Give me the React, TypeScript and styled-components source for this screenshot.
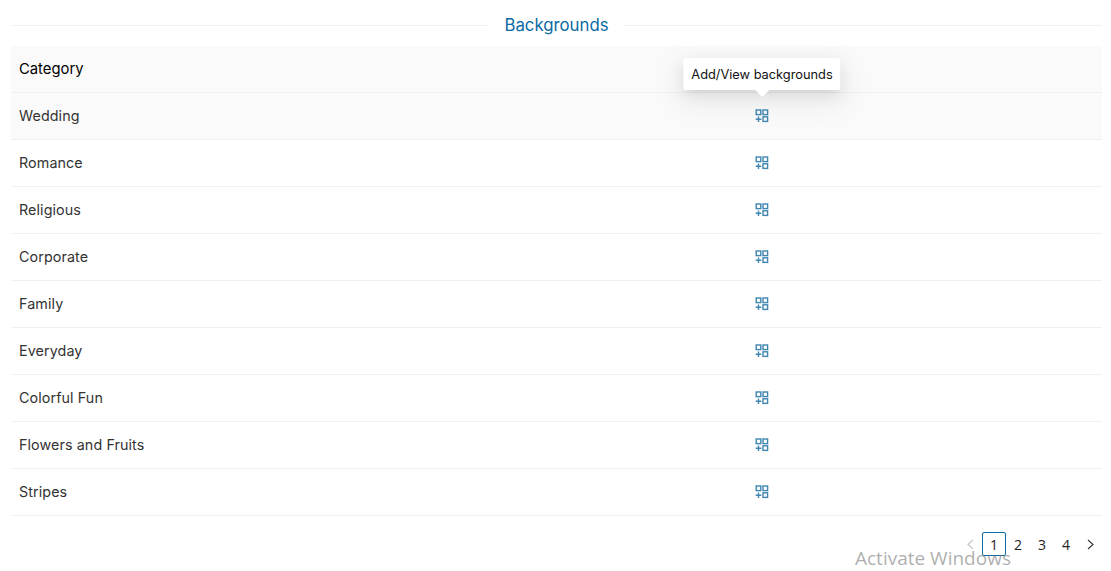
import React from 'react';
import styled, { createGlobalStyle } from 'styled-components';

const GlobalStyle = createGlobalStyle`
  html, body {
    margin: 0;
    padding: 0;
    background: #fff;
  }
  body {
    font-family: Inter, "Noto Sans", sans-serif;
    overflow: hidden;
  }
`;

const Page = styled.div`
  position: relative;
  width: 1111px;
  height: 571px;
  padding: 0 9px 0 11px;
  box-sizing: border-box;
  overflow: hidden;
`;
const TitleRow = styled.div`
  display: flex;
  align-items: center;
  gap: 16px;
  padding: 10px 0 6px;
`;
const TitleLine = styled.div`
  flex: 1;
  height: 1px;
  background: #f0f0f0;
`;
const Title = styled.h2`
  margin: 0;
  font-size: 16.8px;
  line-height: 30px;
  font-weight: 400;
  color: #0b6ba3;
`;
const Row = styled.div<{ $shaded?: boolean }>`
  display: grid;
  grid-template-columns: 411px 680px;
  align-items: center;
  height: 47px;
  box-sizing: border-box;
  border-bottom: 1px solid #f0f0f0;
  background: ${(p) => (p.$shaded ? '#fafafa' : '#fff')};
`;
const HeadCell = styled.div`
  padding-left: 8px;
  font-size: 14.8px;
  font-weight: 400;
  color: #000;
`;
const NameCell = styled.div`
  padding: 0 0 2px 8px;
  font-size: 14.3px;
  letter-spacing: 0.1px;
  color: #333;
`;
const ActionCell = styled.div`
  position: relative;
  display: flex;
  justify-content: center;
  align-items: center;
`;
const Tooltip = styled.div`
  position: absolute;
  left: 50%;
  bottom: 33px;
  transform: translateX(-50%);
  padding: 0 8px;
  height: 32px;
  display: flex;
  align-items: center;
  white-space: nowrap;
  font-size: 12.8px;
  color: #111;
  background: #fff;
  border-radius: 2px;
  box-shadow: 0 3px 6px -4px rgba(0, 0, 0, 0.12), 0 6px 16px 0 rgba(0, 0, 0, 0.08),
    0 9px 28px 8px rgba(0, 0, 0, 0.05);
  z-index: 2;
  &::after {
    content: '';
    position: absolute;
    left: 50%;
    bottom: -5px;
    width: 10px;
    height: 10px;
    background: #fff;
    transform: translateX(-50%) rotate(45deg);
  }
`;
const Pager = styled.div`
  display: flex;
  justify-content: flex-end;
  align-items: center;
  margin-top: 16px;
  font-family: "Open Sans", sans-serif;
  font-size: 14px;
`;
const PageItem = styled.div<{ $active?: boolean }>`
  width: 24px;
  height: 24px;
  box-sizing: border-box;
  display: flex;
  align-items: center;
  justify-content: center;
  color: #222;
  border: 1px solid ${(p) => (p.$active ? '#0b6ba3' : 'transparent')};
  border-radius: 2px;
`;
const Watermark = styled.div`
  position: absolute;
  left: 855px;
  top: 545px;
  font-family: "Open Sans", sans-serif;
  font-size: 19px;
  line-height: 26px;
  color: rgba(120, 120, 120, 0.6);
  pointer-events: none;
  white-space: nowrap;
`;

const categories = [
  'Wedding',
  'Romance',
  'Religious',
  'Corporate',
  'Family',
  'Everyday',
  'Colorful Fun',
  'Flowers and Fruits',
  'Stripes',
];

const AddGridIcon = () => (
  <svg width="14" height="14" viewBox="0 0 14 14" fill="none" stroke="#3f86b0" strokeWidth="1.4">
    <rect x="1.2" y="1" width="4.6" height="4.6" />
    <rect x="8" y="1" width="4.6" height="4.6" />
    <rect x="8" y="7.8" width="4.6" height="4.6" />
    <path d="M3.5 7.4v5.6M0.7 10.2h5.6" />
  </svg>
);

const Chevron = ({ left, color }: { left?: boolean; color: string }) => (
  <svg width="11" height="13" viewBox="0 0 11 13" fill="none" stroke={color} strokeWidth="1.1">
    <path d={left ? 'M8 2 3 6.5 8 11' : 'M3 2 8 6.5 3 11'} />
  </svg>
);

export default function App() {
  return (
    <Page>
      <GlobalStyle />
      <TitleRow>
        <TitleLine />
        <Title>Backgrounds</Title>
        <TitleLine />
      </TitleRow>
      <Row $shaded>
        <HeadCell>Category</HeadCell>
      </Row>
      {categories.map((name, index) => (
        <Row key={name} $shaded={index === 0}>
          <NameCell>{name}</NameCell>
          <ActionCell>
            {index === 0 && <Tooltip>Add/View backgrounds</Tooltip>}
            <AddGridIcon />
          </ActionCell>
        </Row>
      ))}
      <Pager>
        <PageItem>
          <Chevron left color="#c4c4c4" />
        </PageItem>
        <PageItem $active>1</PageItem>
        <PageItem>2</PageItem>
        <PageItem>3</PageItem>
        <PageItem>4</PageItem>
        <PageItem>
          <Chevron color="#333" />
        </PageItem>
      </Pager>
      <Watermark>Activate Windows</Watermark>
    </Page>
  );
}
